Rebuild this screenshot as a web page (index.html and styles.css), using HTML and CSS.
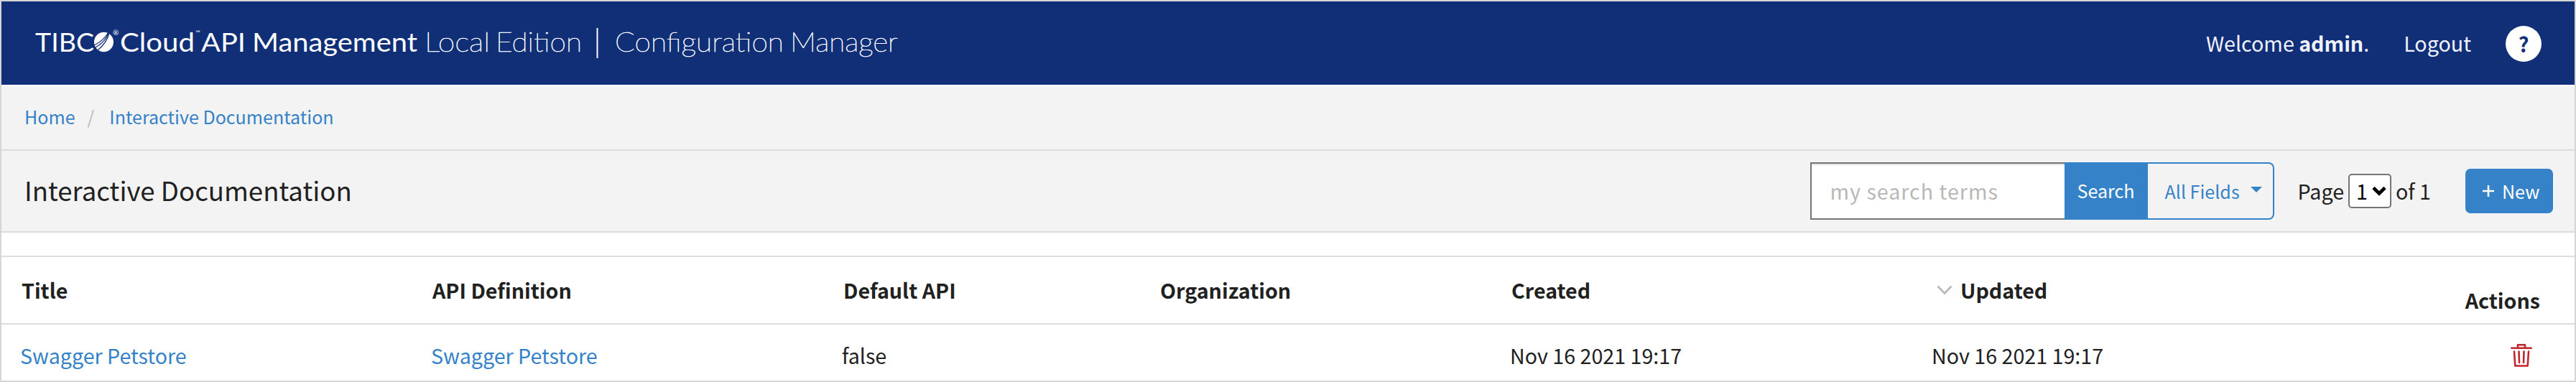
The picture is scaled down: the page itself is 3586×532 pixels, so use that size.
FILE: index.html
```html
<!DOCTYPE html>
<html lang="en">
<head>
<meta charset="utf-8">
<title>Configuration Manager</title>
<link rel="stylesheet" href="styles.css">
</head>
<body>
<div class="app">
  <header class="topbar">
    <svg class="brand" width="1260" height="116" viewBox="0 2 1260 116">
      <g class="brand-medium">
        <text x="49" y="72" textLength="82" lengthAdjust="spacingAndGlyphs">TIBC</text>
        <text x="167" y="72" textLength="104" lengthAdjust="spacingAndGlyphs">Cloud</text>
        <text x="280" y="72" textLength="62" lengthAdjust="spacingAndGlyphs">API</text>
        <text x="351" y="72" textLength="230" lengthAdjust="spacingAndGlyphs">Management</text>
      </g>
      <ellipse cx="144.500" cy="58.500" rx="13.500" ry="13.800" fill="#fff"/>
      <path d="M131 63Q144 57 151 45M133 66Q147 58 151 46M136 70Q149 59 152 46" fill="none" stroke="#112f77" stroke-width="1.200"/>
      <text class="brand-mark" x="157" y="49" font-size="10">®</text>
      <text class="brand-mark" x="272" y="49" font-size="9">™</text>
      <g class="brand-light">
        <text x="591" y="72" textLength="91" lengthAdjust="spacingAndGlyphs">Local</text>
        <text x="690" y="72" textLength="120" lengthAdjust="spacingAndGlyphs">Edition</text>
        <text x="856" y="72" textLength="235" lengthAdjust="spacingAndGlyphs">Configuration</text>
        <text x="1100" y="72" textLength="150" lengthAdjust="spacingAndGlyphs">Manager</text>
      </g>
      <path d="M831.500 39V81" stroke="#fff" stroke-width="2"/>
    </svg>
    <nav class="account">
      <span class="welcome">Welcome <b>admin</b>.</span>
      <a class="logout">Logout</a>
      <span class="help">?</span>
    </nav>
  </header>

  <nav class="crumbs">
    <a>Home</a><span class="slash">/</span><a>Interactive Documentation</a>
  </nav>

  <section class="toolbar">
    <h1>Interactive Documentation</h1>
    <div class="search">
      <div class="search-input">my search terms</div>
      <div class="search-btn">Search</div>
      <div class="search-fields">All Fields<svg width="16" height="8" viewBox="0 0 16 8"><path d="M0 0H16L8 8Z" fill="#3582c8"/></svg></div>
    </div>
    <div class="pager">
      <span>Page</span>
      <div class="select">1<svg width="20" height="14" viewBox="0 0 20 14"><path d="M2 2.500L10 10.500L18 2.500" fill="none" stroke="#000" stroke-width="4.600"/></svg></div>
      <span>of 1</span>
    </div>
    <div class="new"><svg width="16" height="16" viewBox="0 0 16 16"><path d="M8 0V16M0 8H16" stroke="#fff" stroke-width="2.600"/></svg>New</div>
  </section>

  <div class="grid">
    <div class="row head">
      <div>Title</div>
      <div>API Definition</div>
      <div>Default API</div>
      <div>Organization</div>
      <div>Created</div>
      <div class="sorted"><svg width="22" height="14" viewBox="0 0 22 14"><path d="M1.500 1.500L11 11.500L20.500 1.500" fill="none" stroke="#b8b8b8" stroke-width="2.600"/></svg>Updated</div>
      <div class="actions">Actions</div>
    </div>
    <div class="row">
      <div><a>Swagger Petstore</a></div>
      <div><a>Swagger Petstore</a></div>
      <div>false</div>
      <div></div>
      <div>Nov 16 2021 19:17</div>
      <div>Nov 16 2021 19:17</div>
      <div class="trash"><svg width="30" height="32" viewBox="0 0 30 32"><g fill="none" stroke="#c1272d" stroke-width="2.600" stroke-linecap="round" stroke-linejoin="round"><path d="M1.300 5.800H28.700M10 5V1.300H20V5M5 10.500L6.300 30.500H23.700L25 10.500M11.500 10.500L12 26M18.500 10.500L18 26"/></g></svg></div>
    </div>
  </div>
</div>
</body>
</html>
```

FILE: styles.css
```css
* { box-sizing: border-box; }

body {
  margin: 0;
  background: #fff;
  color: #212121;
  font-family: "Noto Sans CJK SC", sans-serif;
  font-size: 28.65px;
  line-height: 40px;
  white-space: nowrap;
}

a { color: #3582c8; }

.app {
  width: 3586px;
  height: 532px;
  border: 2px solid #d6d6d8;
  overflow: hidden;
}

.topbar {
  display: flex;
  justify-content: space-between;
  align-items: center;
  height: 116px;
  background: #112f77;
}

.brand { margin-left: -2px; }
.brand text { fill: #fff; font-family: Lato, sans-serif; }
.brand-medium text { font-size: 37px; font-weight: 400; }
.brand-light text { font-size: 37px; font-weight: 100; stroke: #fff; stroke-width: .7px; }
.brand .brand-mark { font-weight: 400; }

.account {
  display: flex;
  align-items: center;
  color: #f0f2ff;
  padding-right: 46px;
}
.logout { color: inherit; margin: 0 48px 0 48px; }
.help {
  width: 50px;
  height: 50px;
  border-radius: 50%;
  background: #fff;
  color: #112f77;
  font-weight: 700;
  text-align: center;
  line-height: 50px;
  margin-top: 2px;
}

.crumbs {
  display: flex;
  align-items: center;
  height: 92px;
  padding: 0 0 5px 32px;
  background: #f3f3f3;
  border-top: 2px solid #f8f8fa;
  border-bottom: 2px solid #ddd;
  font-size: 25.07px;
}
.slash { color: #bbb; margin: 0 21px 0 17px; }

.toolbar {
  display: flex;
  align-items: center;
  height: 114px;
  padding: 0 30px 0 32px;
  background: #f3f3f3;
  border-bottom: 2px solid #ddd;
}
h1 { margin: 0 auto 3px 0; font-size: 36.6px; font-weight: 400; }

.search { display: flex; height: 80px; font-size: 25.07px; line-height: 76px; }
.search-input {
  width: 354px;
  padding-left: 26px;
  border: 2px solid #757575;
  border-right: 0;
  background: #fff;
  box-shadow: inset 0 2px 2px #e4e4e4;
  color: #b8b8b8;
  font-size: 28.65px;
  letter-spacing: 1px;
}
.search-btn { width: 116px; background: #3582c8; color: #fff; text-align: center; line-height: 78px; }
.search-fields {
  display: flex;
  align-items: center;
  gap: 15px;
  width: 176px;
  padding-left: 24px;
  border: 2px solid #3582c8;
  border-left: 0;
  border-radius: 0 8px 8px 0;
  color: #3582c8;
}
.search-fields svg { margin-top: -4px; }

.pager { display: flex; align-items: center; margin-left: 33px; gap: 6px; }
.select {
  display: flex;
  align-items: center;
  gap: 6px;
  width: 60px;
  height: 48px;
  padding-left: 9px;
  border: 2px solid #757575;
  border-radius: 5px;
  background: #fff;
  color: #000;
}
.new {
  display: flex;
  align-items: center;
  gap: 11px;
  width: 122px;
  height: 62px;
  margin-left: 48px;
  padding-left: 24px;
  border-radius: 7px;
  background: #3582c8;
  color: #fff;
  font-size: 25.07px;
}

.grid { margin-top: 32px; border-top: 2px solid #ddd; }
.row {
  display: grid;
  grid-template-columns: 572px 572px 441px 489px 587px 1fr 170px;
  align-items: center;
  height: 80px;
  padding: 5px 30px 0 26px;
}
.head {
  height: 94px;
  padding-top: 0;
  padding-left: 28px;
  border-bottom: 2px solid #ddd;
  font-weight: 700;
}
.sorted { display: flex; align-items: center; gap: 11px; padding-left: 5px; }
.actions { text-align: right; padding: 28px 18px 0 0; }
.trash { display: flex; justify-content: flex-end; padding-right: 29px; }
```
